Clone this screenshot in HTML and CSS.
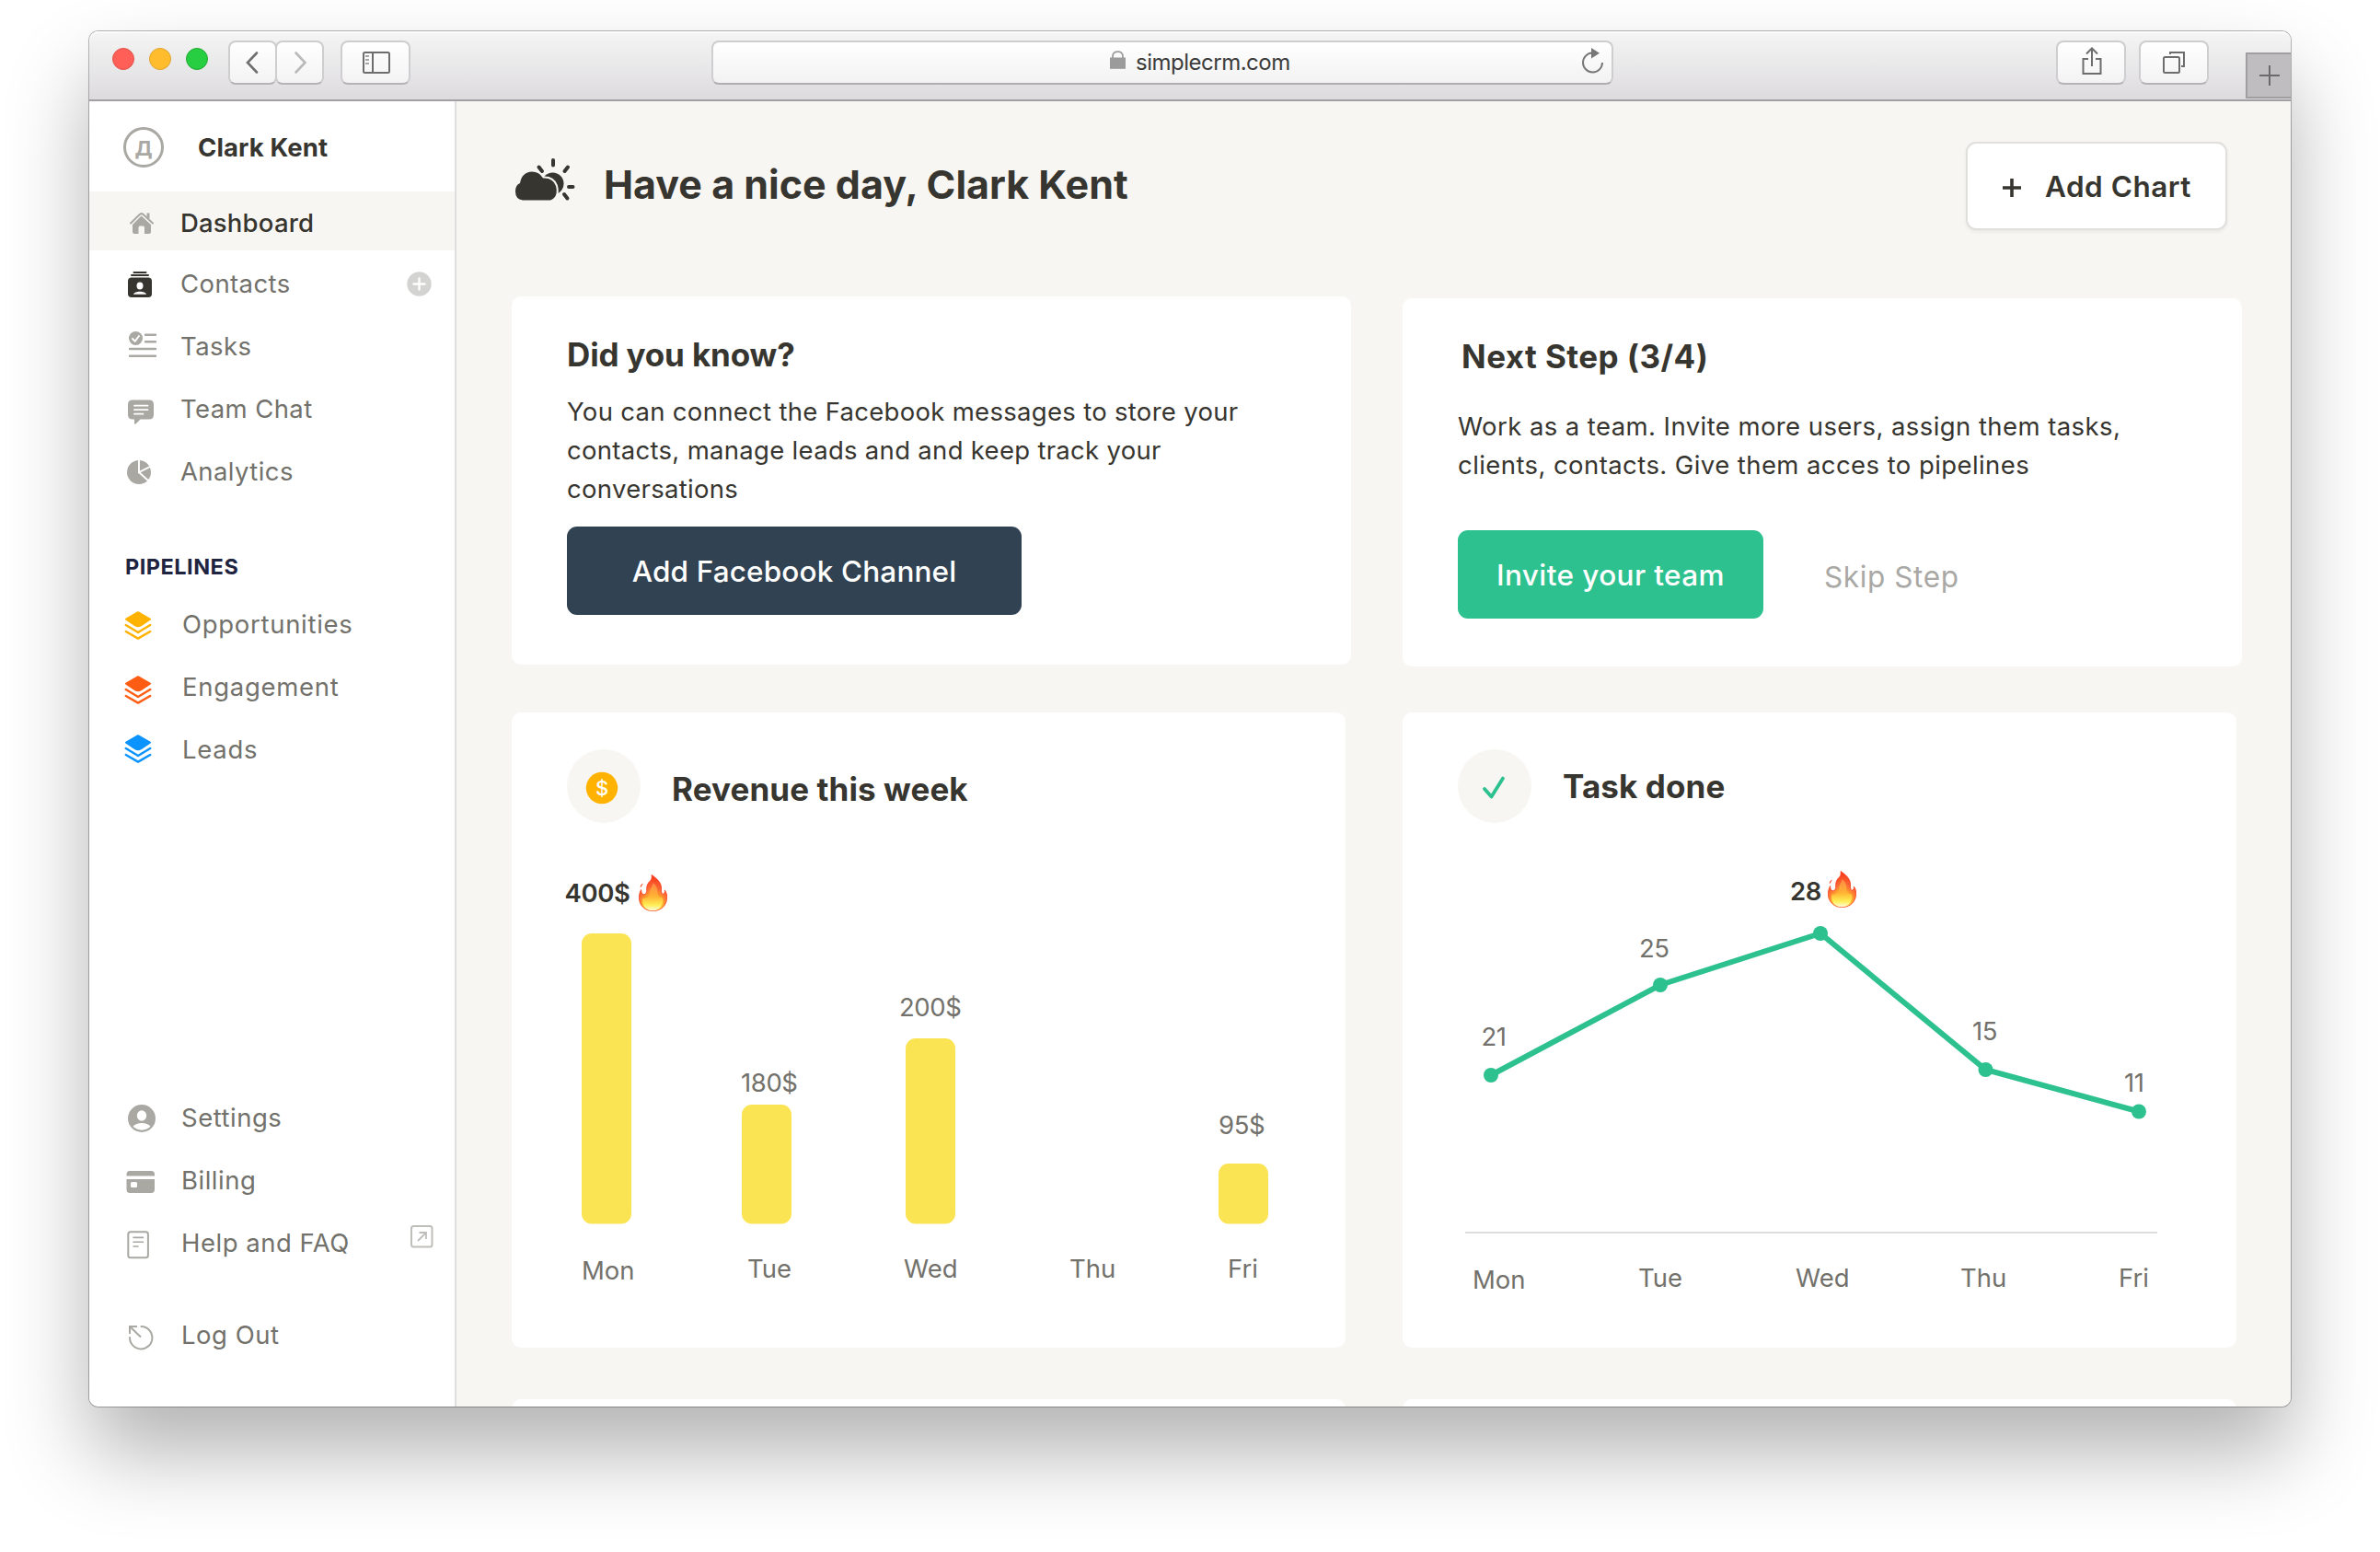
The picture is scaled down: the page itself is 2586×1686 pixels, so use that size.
FILE: index.html
```html
<!DOCTYPE html>
<html lang="en">
<head>
<meta charset="utf-8">
<title>SimpleCRM – Dashboard</title>
<link rel="stylesheet" href="styles.css">
</head>
<body>
<svg class="defs" width="0" height="0" aria-hidden="true">
  <defs>
    <radialGradient id="fire" cx=".5" cy=".95" r=".9">
      <stop offset="0" stop-color="#fffbd0"/>
      <stop offset=".18" stop-color="#ffee5c"/>
      <stop offset=".42" stop-color="#ffab2e"/>
      <stop offset=".65" stop-color="#fb6b34"/>
      <stop offset="1" stop-color="#f8391c"/>
    </radialGradient>
    <linearGradient id="fire-core" x1="0" y1="0" x2="0" y2="1">
      <stop offset="0" stop-color="#fd8a45"/>
      <stop offset=".5" stop-color="#ffb433"/>
      <stop offset=".8" stop-color="#ffee55"/>
      <stop offset="1" stop-color="#fffde0"/>
    </linearGradient>
    <symbol id="flame" viewBox="0 0 31 40">
      <path fill="url(#fire)" stroke="#fa3a1a" stroke-width=".8" d="M14 .5C18 3 25 8.500 24.500 15C24.300 18 24.500 20 26 21.500C28 21 28.800 19 28.300 17C30 19 30.800 22 30.600 25.500C30.300 31.500 27 37 20 39C17 39.800 13 39.800 10 38.800C4 36.500 .500 31.500 .400 25.500C.400 22 1.200 19 2.600 16.500C2.700 19 3.300 21.300 5 21.800C8 22 9 19 8.700 16C8.500 12 10 9 12.500 7C14.200 5.500 14.500 3 14 .5Z"/>
      <path fill="url(#fire-core)" d="M15.500 9C19 12 20.500 15 20.300 19C20.200 22.500 22 25 25.500 25C28 29 25 36 19 38.600C16 39.500 13 39.300 10.500 38.300C5 36 3 30 4.500 25.500C9 26.500 12 23.500 12 19.500C12 15.500 15 13 15.500 9Z"/>
      <path fill="#f8401f" d="M4.800 9.500C4 12 2.600 12.500 2 14.800C1.200 12.300 2.500 10.700 4.800 9.500Z"/>
    </symbol>
    <symbol id="layers" viewBox="0 0 30 32">
      <path fill="currentColor" stroke="currentColor" stroke-width="2" stroke-linejoin="round" d="M15 2.200L28 9.600L18 16.400Q15 18 12 16.400L2 9.600Z"/>
      <path fill="none" stroke="currentColor" stroke-width="2.500" stroke-linecap="round" stroke-linejoin="round" d="M1.800 16L15 24L28.200 16M1.800 23L15 30.600L28.200 23"/>
    </symbol>
  </defs>
</svg>

<div class="window">
  <header class="toolbar">
    <div class="lights"><i class="red"></i><i class="amber"></i><i class="green"></i></div>
    <div class="nav-buttons">
      <span class="tool"><svg width="18" height="26" viewBox="0 0 18 26"><path d="M13 2.500L3 13L13 23.500" fill="none" stroke="#6f6f6f" stroke-width="2.600" stroke-linecap="round"/></svg></span>
      <span class="tool"><svg width="18" height="26" viewBox="0 0 18 26"><path d="M4.500 2.500L14.500 13L4.500 23.500" fill="none" stroke="#b9b9b9" stroke-width="2.600" stroke-linecap="round"/></svg></span>
    </div>
    <span class="tool tool-panel"><svg width="30" height="24" viewBox="0 0 30 24" fill="none" stroke="#6d6d6d" stroke-width="2"><rect x="1" y="1" width="28" height="22" rx="1.500"/><path d="M11 1V23"/><path d="M3 5H7M3 9H7M3 13H7" stroke="#8b8b8b" stroke-width="1.600"/></svg></span>
    <div class="address">
      <svg class="lock" width="17" height="20" viewBox="0 0 17 20"><rect y="7.500" width="17" height="12.300" fill="#9b9b9b"/><path d="M3 8V6C3 -.6 14 -.6 14 6V8" fill="none" stroke="#9b9b9b" stroke-width="1.800"/></svg>
      <span class="url">simplecrm.com</span>
      <svg class="reload" width="26" height="30" viewBox="0 0 26 30"><path d="M12 6.500A10.500 10.500 0 1 0 23 17" fill="none" stroke="#777" stroke-width="2"/><path d="M11 1L20 6.700L11 12.400Z" fill="#777"/></svg>
    </div>
    <span class="tool tool-share"><svg width="24" height="32" viewBox="0 0 24 32" fill="none" stroke="#6d6d6d" stroke-width="2"><path d="M9 14H3.500V30H22.500V14H17M13 22V3M7 8.500L13 2.500L19 8.500"/></svg></span>
    <span class="tool tool-tabs"><svg width="26" height="26" viewBox="0 0 26 26" fill="none" stroke="#6d6d6d" stroke-width="2"><rect x="2" y="7" width="17" height="17" rx="1.500"/><path d="M9 4V2H24V17H21"/></svg></span>
    <span class="new-tab"><svg width="22" height="22" viewBox="0 0 22 22"><path d="M0 11H22M11 0V22" stroke="#6b696c" stroke-width="2"/></svg></span>
  </header>

  <div class="app">
    <aside class="sidebar">
      <div class="user">
        <span class="avatar">Д</span>
        <span class="user-name">Clark Kent</span>
      </div>

      <nav class="menu">
        <a class="item active">
          <svg class="icon" viewBox="0 0 40 40"><path fill="#a9a8a3" d="M19.500 12.500L30 22V29.500Q30 32 27.500 32H23V25Q23 23.500 21.500 23.500H18Q16.500 23.500 16.500 25V32H12.500Q10 32 10 29.500V22Z"/><path d="M8 20.500L18 10.800Q19.700 9.400 21.400 10.800L32 20.500" fill="none" stroke="#a9a8a3" stroke-width="2" stroke-linecap="round"/><path d="M27 9.500V15.500" fill="none" stroke="#a9a8a3" stroke-width="3"/></svg>
          <span>Dashboard</span>
        </a>
        <a class="item">
          <svg class="icon" viewBox="0 0 40 40"><g fill="#37352f"><rect x="5" y="13.500" width="26" height="21.500" rx="4"/><rect x="8" y="10" width="20" height="2" rx="1"/><rect x="10.500" y="7" width="15" height="2" rx="1"/></g><ellipse cx="18" cy="22.500" rx="3.500" ry="4" fill="#fff"/><path d="M11 31.700C12 27.600 24 27.600 25 31.700Z" fill="#fff"/></svg>
          <span>Contacts</span>
          <svg class="side plus" width="27" height="27" viewBox="0 0 27 27"><circle cx="13.500" cy="13.500" r="13.200" fill="#d3d3d1"/><path d="M7.500 13.500H19.500M13.500 7.500V19.500" stroke="#fff" stroke-width="2.400" stroke-linecap="round"/></svg>
        </a>
        <a class="item">
          <svg class="icon" viewBox="0 0 40 40"><circle cx="13.500" cy="11.500" r="7.500" fill="#a9a8a3"/><path d="M10 12L12.700 14.800L17 9" fill="none" stroke="#fff" stroke-width="2" stroke-linecap="round"/><path d="M24 7.800H35M24 15.200H35M7 23H35M7 30.700H35" stroke="#a9a8a3" stroke-width="2.400" stroke-linecap="round"/></svg>
          <span>Tasks</span>
        </a>
        <a class="item">
          <svg class="icon" viewBox="0 0 40 40"><path fill="#a9a8a3" d="M10 10.500H28Q33 10.500 33 15.500V26.500Q33 31.500 28 31.500H18.500L13.500 36.500Q12 37.500 12 35.500V31.500H10Q5 31.500 5 26.500V15.500Q5 10.500 10 10.500Z"/><path d="M12 16.700H26.500M12 21.200H26.500M12 25.700H21.500" stroke="#fff" stroke-width="1.800" stroke-linecap="round"/></svg>
          <span>Team Chat</span>
        </a>
        <a class="item">
          <svg class="icon" viewBox="0 0 40 40"><circle cx="17" cy="21" r="13" fill="#a9a8a3"/><path d="M17 7V21L31 14M17 21L28 31" fill="none" stroke="#fff" stroke-width="1.900"/></svg>
          <span>Analytics</span>
        </a>
      </nav>

      <h2 class="group">PIPELINES</h2>
      <nav class="menu pipelines">
        <a class="item"><svg class="stack amber-stack"><use href="#layers"/></svg><span>Opportunities</span></a>
        <a class="item"><svg class="stack orange-stack"><use href="#layers"/></svg><span>Engagement</span></a>
        <a class="item"><svg class="stack blue-stack"><use href="#layers"/></svg><span>Leads</span></a>
      </nav>

      <nav class="menu account">
        <a class="item">
          <svg class="icon" viewBox="0 0 40 40"><circle cx="20" cy="21" r="15" fill="#a9a8a3"/><ellipse cx="20" cy="18" rx="5.200" ry="5.700" fill="#fff"/><path d="M10.500 29.800C14 24.700 26 24.700 29.500 29.800Q20 37.500 10.500 29.800Z" fill="#fff"/></svg>
          <span>Settings</span>
        </a>
        <a class="item">
          <svg class="icon" viewBox="0 0 40 40"><path fill="#a9a8a3" d="M3.500 15.500V14Q3.500 10 7 10H30.500Q34 10 34 14V15.500ZM3.500 19H34V30Q34 34 30.500 34H7Q3.500 34 3.500 30Z"/><rect x="8" y="22" width="7" height="6" rx="1.500" fill="#fff"/></svg>
          <span>Billing</span>
        </a>
        <a class="item">
          <svg class="icon" viewBox="0 0 40 40"><rect x="5.300" y="8.300" width="21.600" height="28" rx="2.500" fill="none" stroke="#a9a8a3" stroke-width="2"/><path d="M11 14.400H21.500M11 19.200H21.500M11 24H16" stroke="#a9a8a3" stroke-width="1.600" stroke-linecap="round"/></svg>
          <span>Help and FAQ</span>
          <svg class="side link" width="25" height="25" viewBox="0 0 25 25" fill="none" stroke="#bfbebb"><rect x="1" y="1" width="22.500" height="22.500" rx="2.500" stroke-width="2"/><path d="M8 17L16.500 8.500M9.500 8H17V15" stroke-width="1.800"/></svg>
        </a>
        <a class="item logout">
          <svg class="icon" viewBox="0 0 40 40" fill="none" stroke="#a9a8a3" stroke-width="2"><path d="M19.500 11A12.200 12.200 0 1 1 7 23" stroke-linecap="round"/><path d="M19 22.500L7.500 11.500M7 19V11H15"/></svg>
          <span>Log Out</span>
        </a>
      </nav>
    </aside>

    <main class="main">
      <div class="page-head">
        <svg class="weather" width="66" height="48" viewBox="0 0 66 48"><g stroke="#37352f" stroke-width="4" stroke-linecap="round"><path d="M42 3V8.500M58 10.500L54.500 15M26.500 10.500L30 15M59 32H63.500M54 40L57.500 44.500"/></g><circle cx="41.500" cy="28.500" r="12" fill="#37352f"/><path d="M9 46.500Q1 45.500 1 37Q1 30 6 28Q8 16 19 15.500Q27 15.500 31 22.500Q42 22 45 31Q48 43 39 46.500Z" fill="#37352f" stroke="#f7f6f2" stroke-width="4" paint-order="stroke"/></svg>
        <h1>Have a nice day, Clark Kent</h1>
        <button class="add-chart"><svg width="20" height="20" viewBox="0 0 20 20"><path d="M0 10H20M10 0V20" stroke="#37352f" stroke-width="3.600"/></svg><span>Add Chart</span></button>
      </div>

      <div class="grid tips">
        <section class="card">
          <h3>Did you know?</h3>
          <p>You can connect the Facebook messages to store your<br>contacts, manage leads and and keep track your<br>conversations</p>
          <button class="btn navy">Add Facebook Channel</button>
        </section>
        <section class="card next-step">
          <h3>Next Step (3/4)</h3>
          <p>Work as a team. Invite more users, assign them tasks,<br>clients, contacts. Give them acces to pipelines</p>
          <div class="actions"><button class="btn green-btn">Invite your team</button><a class="skip">Skip Step</a></div>
        </section>
      </div>

      <div class="grid charts">
        <section class="card">
          <div class="card-head revenue-head">
            <span class="badge"><svg width="80" height="80" viewBox="0 0 80 80"><circle cx="38" cy="42" r="17.200" fill="#ffb300"/><text x="38" y="50" class="coin">$</text></svg></span>
            <h3>Revenue this week</h3>
          </div>
          <svg class="chart" width="906" height="570" viewBox="556 894 906 570">
            <g class="bars">
              <rect x="632" y="1014" width="54" height="315.500" rx="11"/>
              <rect x="806" y="1200" width="54" height="129.500" rx="11"/>
              <rect x="984" y="1128" width="54" height="201.500" rx="11"/>
              <rect x="1324" y="1264" width="54" height="65.500" rx="11"/>
            </g>
            <g class="values">
              <text class="peak" x="613.500" y="980">400$</text>
              <text x="805" y="1186">180$</text>
              <text x="977" y="1104">200$</text>
              <text x="1324" y="1232">95$</text>
            </g>
            <use href="#flame" x="694" y="950" width="31" height="40"/>
            <g class="days">
              <text x="632" y="1390">Mon</text>
              <text x="812" y="1388">Tue</text>
              <text x="982" y="1388">Wed</text>
              <text x="1162" y="1388">Thu</text>
              <text x="1334" y="1388">Fri</text>
            </g>
          </svg>
        </section>

        <section class="card">
          <div class="card-head">
            <span class="badge"><svg width="80" height="80" viewBox="0 0 80 80"><path d="M29 43L36.500 51.500L49 31.500" fill="none" stroke="#2dc18f" stroke-width="3.800" stroke-linecap="round" stroke-linejoin="round"/></svg></span>
            <h3>Task done</h3>
          </div>
          <svg class="chart" width="906" height="570" viewBox="1524 894 906 570">
            <path d="M1592 1339H2344" stroke="#dcdcda" stroke-width="2"/>
            <polyline points="1620,1168 1804,1070 1978,1014 2157.500,1162 2324,1207.500" fill="none" stroke="#2dc18f" stroke-width="6"/>
            <g fill="#2dc18f"><circle cx="1620" cy="1168" r="8"/><circle cx="1804" cy="1070" r="8"/><circle cx="1978" cy="1014" r="8"/><circle cx="2157.500" cy="1162" r="8"/><circle cx="2324" cy="1207.500" r="8"/></g>
            <g class="values">
              <text x="1609.500" y="1136">21</text>
              <text x="1781" y="1040">25</text>
              <text class="peak" x="1945" y="978">28</text>
              <text x="2143" y="1130">15</text>
              <text x="2308" y="1186">11</text>
            </g>
            <use href="#flame" x="1986" y="946" width="31" height="40"/>
            <g class="days">
              <text x="1600" y="1400">Mon</text>
              <text x="1780" y="1398">Tue</text>
              <text x="1951" y="1398">Wed</text>
              <text x="2130" y="1398">Thu</text>
              <text x="2302" y="1398">Fri</text>
            </g>
          </svg>
        </section>
      </div>

      <div class="grid upcoming">
        <section class="card"></section>
        <section class="card"></section>
      </div>
    </main>
  </div>
</div>
</body>
</html>
```
FILE: styles.css
```css
* { box-sizing: border-box; }

body {
  margin: 0;
  width: 2586px;
  height: 1686px;
  overflow: hidden;
  padding: 34px 97px 0;
  background: #fff;
  color: #37352f;
  font-family: Inter, "Liberation Sans", sans-serif;
  font-size: 27.5px;
}

.defs { position: absolute; }
svg { display: block; flex: none; overflow: visible; }
h1, h2, h3, p { margin: 0; }
button { font-family: inherit; }

/* Browser window */
.window {
  width: 2392px;
  height: 1494px;
  display: flex;
  flex-direction: column;
  border-radius: 10px;
  background: #fff;
  box-shadow: 0 0 0 1px rgba(0, 0, 0, .28), 0 50px 90px rgba(0, 0, 0, .3);
}

.toolbar {
  position: relative;
  display: flex;
  align-items: flex-start;
  flex: none;
  height: 76px;
  padding: 10px 0 0 25px;
  border-bottom: 2px solid #a2a0a3;
  border-radius: 10px 10px 0 0;
  background: linear-gradient(#f5f5f5, #dddbde);
  box-shadow: inset 0 2px 0 #fbfbfb;
}

.lights { display: flex; gap: 16px; margin: 8px 22px 0 0; }
.lights i { width: 24px; height: 24px; border-radius: 50%; border-width: 1px; border-style: solid; }
.red { background: #ff5f57; border-color: #e2514c; }
.amber { background: #ffbd2e; border-color: #e0a32e; }
.green { background: #28ce41; border-color: #22a934; }

.nav-buttons { display: flex; margin-right: 18px; }
.tool {
  display: flex;
  align-items: center;
  justify-content: center;
  width: 76px;
  height: 48px;
  border: 2px solid #cfcdcf;
  border-bottom-color: #b5b3b6;
  border-radius: 8px;
  background: linear-gradient(#fff, #f3f3f3);
}
.nav-buttons .tool { width: 53px; }
.nav-buttons .tool + .tool { margin-left: -2px; }
.tool-panel { margin-right: 327px; }
.tool-panel svg { margin-left: 2px; }
.tool-share { margin-right: 14px; }
.tool-share svg { margin-top: -4px; }

.address {
  display: flex;
  align-items: center;
  width: 980px;
  height: 48px;
  margin-right: 481px;
  padding-left: 431px;
  border: 2px solid #cfcdcf;
  border-bottom-color: #b0aeb1;
  border-radius: 8px;
  background: linear-gradient(#fff, #f2f2f2);
}
.lock { margin: -7px 11px 0 0; }
.url { margin-top: -1px; color: #3c3c3c; font-size: 24px; letter-spacing: -.5px; }
.reload { margin: -4px 7px 0 auto; }

.new-tab {
  position: absolute;
  right: 0;
  top: 23px;
  width: 49px;
  height: 50px;
  padding: 12px 0 0 13px;
  border: 2px solid #a09ea1;
  border-right: 0;
  background: #bfbdc0;
}

.app { display: flex; flex: 1; min-height: 0; overflow: hidden; border-radius: 0 0 10px 10px; }

/* Sidebar */
.sidebar { width: 399px; flex: none; border-right: 2px solid #dfdedf; background: #fff; }
.user { display: flex; align-items: center; height: 98px; padding: 2px 0 0 37px; }
.avatar {
  width: 44px;
  height: 44px;
  margin-right: 37px;
  border: 3px solid #a9a8a3;
  border-radius: 50%;
  color: #a9a8a3;
  font-size: 22px;
  font-weight: 700;
  line-height: 40px;
  text-align: center;
}
.user-name { font-weight: 700; letter-spacing: .1px; }

.menu { display: flex; flex-direction: column; }
.item {
  display: flex;
  align-items: center;
  height: 68px;
  padding: 0 25px 0 37px;
  color: #72716b;
  letter-spacing: .4px;
}
.item.active {
  height: 64px;
  margin-bottom: 2px;
  padding-top: 4px;
  background: #f7f6f2;
  color: #37352f;
  font-weight: 500;
  letter-spacing: .2px;
}
.icon { width: 40px; height: 40px; margin-right: 22px; }
.side { margin-left: auto; }
.link { margin: -14px -2px 0 auto; }
.group {
  margin: 54px 0 12px 39px;
  color: #1f2440;
  font-size: 23.5px;
  font-weight: 700;
  line-height: 32px;
  letter-spacing: .5px;
}
.pipelines .item { letter-spacing: .7px; }
.stack { width: 30px; height: 32px; margin: 1px 33px 0 1px; }
.amber-stack { color: #ffb300; }
.orange-stack { color: #ff5d13; margin-top: 5px; }
.blue-stack { color: #0b93ff; margin-top: -3px; }
.account { margin-top: 332px; }
.account .item { letter-spacing: .5px; }
.account .icon { margin-right: 23px; }
.account .logout { margin-top: 32px; }

/* Page */
.main { flex: 1; background: #f7f6f2; padding: 44px 0 0 60px; }
.page-head { display: flex; align-items: center; height: 96px; margin-bottom: 72px; padding-right: 69px; }
.weather { margin: -15px 31px 0 3px; }
h1 { margin-top: -5px; font-size: 43px; font-weight: 700; line-height: 52px; letter-spacing: 0; }
.add-chart {
  display: flex;
  align-items: center;
  gap: 26px;
  width: 284px;
  height: 96px;
  margin-left: auto;
  padding: 0 0 0 38px;
  border: 2px solid #e0dfdc;
  border-radius: 11px;
  background: #fff;
  box-shadow: 0 2px 4px rgba(0, 0, 0, .06);
  color: #37352f;
  font-size: 31.5px;
  font-weight: 600;
  letter-spacing: .5px;
}
.add-chart svg { margin-top: 4px; }

.grid { display: grid; grid-template-columns: 912px 912px; column-gap: 56px; }
.card { border-radius: 10px; background: #fff; }
h3 { font-size: 35px; font-weight: 700; line-height: 42px; letter-spacing: .1px; }
p { position: relative; top: 1px; line-height: 42px; letter-spacing: .3px; white-space: nowrap; }

.tips { margin-bottom: 50px; }
.tips .card { height: 400px; padding: 42px 0 0 60px; }
.tips h3 { margin-bottom: 19px; letter-spacing: -.15px; }
.btn {
  height: 96px;
  border: 0;
  border-radius: 11px;
  color: #fff;
  font-size: 31.5px;
  font-weight: 500;
  letter-spacing: .15px;
}
.navy { width: 494px; margin-top: 21px; background: #314252; }
.tips .next-step { margin-top: 2px; }
.tips .next-step h3 { margin: 0 0 33px 4px; letter-spacing: .45px; }
.tips .next-step p { letter-spacing: .42px; }
.actions { display: flex; align-items: center; gap: 66px; margin-top: 51px; }
.green-btn { width: 332px; background: #2dc18f; letter-spacing: .4px; }
.skip { margin-top: 5px; color: #a9a8a5; font-size: 31.5px; letter-spacing: .6px; }

.charts .card { width: 906px; height: 690px; padding-top: 40px; }
.card-head { display: flex; align-items: center; gap: 34px; height: 80px; padding-left: 60px; }
.card-head h3 { margin-top: -1px; }
.revenue-head h3 { padding-top: 6px; }
.badge { width: 80px; height: 80px; border-radius: 50%; background: #f7f6f2; }
.coin { fill: #fff; font-size: 22px; text-anchor: middle; font-weight: 500; }

.bars rect { fill: #fbe453; }
.chart text { fill: #72716b; font-size: 27.5px; }
.chart .peak { fill: #37352f; font-weight: 600; }
.chart .values text { letter-spacing: -.4px; }

.upcoming { margin-top: 56px; }
.upcoming .card { width: 906px; height: 200px; }
```
